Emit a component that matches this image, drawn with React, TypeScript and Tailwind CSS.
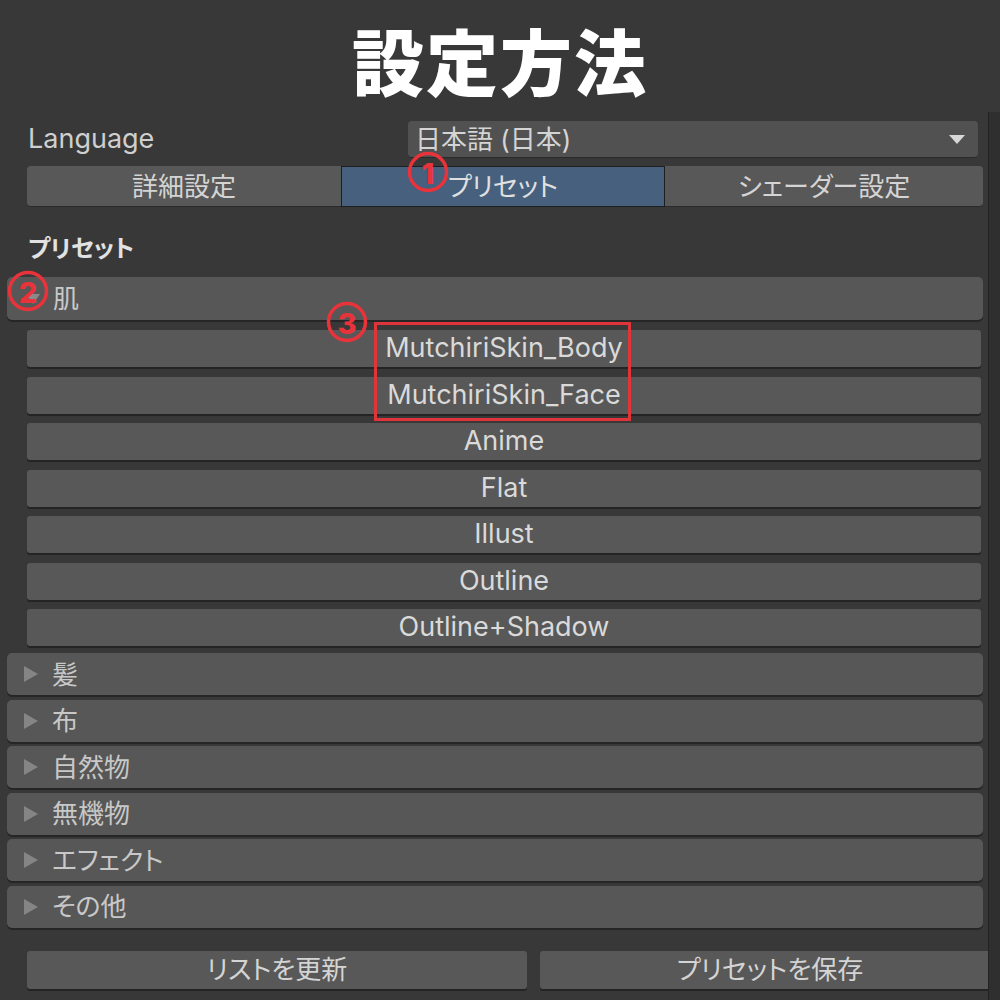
import React from 'react';

const presets = [
  'MutchiriSkin_Body',
  'MutchiriSkin_Face',
  'Anime',
  'Flat',
  'Illust',
  'Outline',
  'Outline+Shadow',
];

const folds = ['髪', '布', '自然物', '無機物', 'エフェクト', 'その他'];

const font = "font-['Inter','Noto_Sans_CJK_JP',sans-serif] [font-feature-settings:'palt']";

const Circled = ({ n, className }: { n: string; className: string }) => (
  <svg width="42" height="42" viewBox="0 0 42 42" className={`absolute ${className}`}>
    <circle cx="21" cy="21" r="18.5" fill="none" stroke="#e8333b" strokeWidth="3.5" />
    <text
      x="21"
      y="22"
      textAnchor="middle"
      dominantBaseline="central"
      fill="#e8333b"
      fontSize="29"
      fontWeight="800"
      fontFamily="Inter, sans-serif"
    >
      {n}
    </text>
  </svg>
);

const App = () => {
  return (
    <div className={`relative w-[1000px] h-[1000px] overflow-hidden bg-[#383838] text-[#d4d4d4] ${font}`}>
      {/* scrollbar strip */}
      <div className="absolute right-0 top-[112px] bottom-0 w-[12px] bg-[#2f2f2f] border-l border-[#232323]"></div>

      <div className="h-[118px] flex items-center justify-center text-white text-[72px] font-black tracking-[2px] font-['Noto_Sans_CJK_JP',sans-serif]">
        設定方法
      </div>

      {/* Language */}
      <div className="flex items-center h-[37px] mt-[3px] pl-[28px] pr-[22px]">
        <div className="w-[380px] text-[27px] text-[#cfcfcf]">Language</div>
        <div className="flex-1 h-full rounded-[4px] bg-[#515151] border-b border-[#2a2a2a] flex items-center justify-between pl-[7px] pr-[12px] text-[26px]">
          <span>日本語 (日本)</span>
          <svg width="18" height="11" viewBox="0 0 18 11"><path d="M1 1h16L9 10z" fill="#d8d8d8" /></svg>
        </div>
      </div>

      {/* Tabs */}
      <div className="flex h-[41px] mt-[8px] ml-[27px] mr-[17px] text-[26px]">
        <div className="w-[314px] bg-[#585858] rounded-l-[4px] border-b border-[#2a2a2a] flex items-center justify-center">詳細設定</div>
        <div className="w-[324px] bg-[#46607e] border border-[#1e1e1e] flex items-center justify-center text-[#e0e0e0]">プリセット</div>
        <div className="flex-1 bg-[#585858] rounded-r-[4px] border-b border-[#2a2a2a] flex items-center justify-center">シェーダー設定</div>
      </div>

      {/* Section label */}
      <div className="h-[70px] pl-[28px] pt-[24px] text-[24px] font-bold text-[#e2e2e2]">プリセット</div>

      {/* 肌 foldout open */}
      <div className="ml-[7px] mr-[17px] h-[43px] bg-[#575757] rounded-[5px] shadow-[0_2px_0_#262626] flex items-center pl-[18px] text-[26px] text-[#c8c8c8]">
        <svg width="16" height="12" viewBox="0 0 16 12" className="mr-[12px]"><path d="M1 1h14L8 11z" fill="#8a8a8a" /></svg>
        肌
      </div>

      <div className="flex flex-col gap-[9.5px] mt-[10px] ml-[27px] mr-[19px]">
        {presets.map((p) => (
          <div
            key={p}
            className="h-[37px] bg-[#585858] rounded-[3px] shadow-[0_2px_0_#242424] flex items-center justify-center text-[27px] text-[#dadada]"
          >
            {p}
          </div>
        ))}
      </div>

      <div className="flex flex-col gap-[4.5px] mt-[7px] ml-[7px] mr-[17px]">
        {folds.map((f) => (
          <div
            key={f}
            className="h-[42px] bg-[#575757] rounded-[5px] shadow-[0_2px_0_#262626] flex items-center pl-[16px] text-[26px] text-[#c8c8c8]"
          >
            <svg width="16" height="18" viewBox="0 0 16 18" className="mr-[13px]"><path d="M1 1l14 8L1 17z" fill="#858585" /></svg>
            {f}
          </div>
        ))}
      </div>

      <div className="flex gap-[13px] mt-[23px] ml-[27px] text-[26px]">
        <div className="w-[500px] h-[38px] bg-[#585858] rounded-[3px] shadow-[0_2px_0_#242424] flex items-center justify-center">リストを更新</div>
        <div className="w-[460px] h-[38px] bg-[#585858] rounded-[3px] shadow-[0_2px_0_#242424] flex items-center justify-center">プリセットを保存</div>
      </div>

      {/* annotations */}
      <Circled n="1" className="left-[407px] top-[151px]" />
      <Circled n="2" className="left-[7px] top-[270px]" />
      <Circled n="3" className="left-[326px] top-[301px]" />
      <div className="absolute left-[374px] top-[322px] w-[257px] h-[99px] border-[3px] border-[#e0343b]"></div>
    </div>
  );
};

export default App;
